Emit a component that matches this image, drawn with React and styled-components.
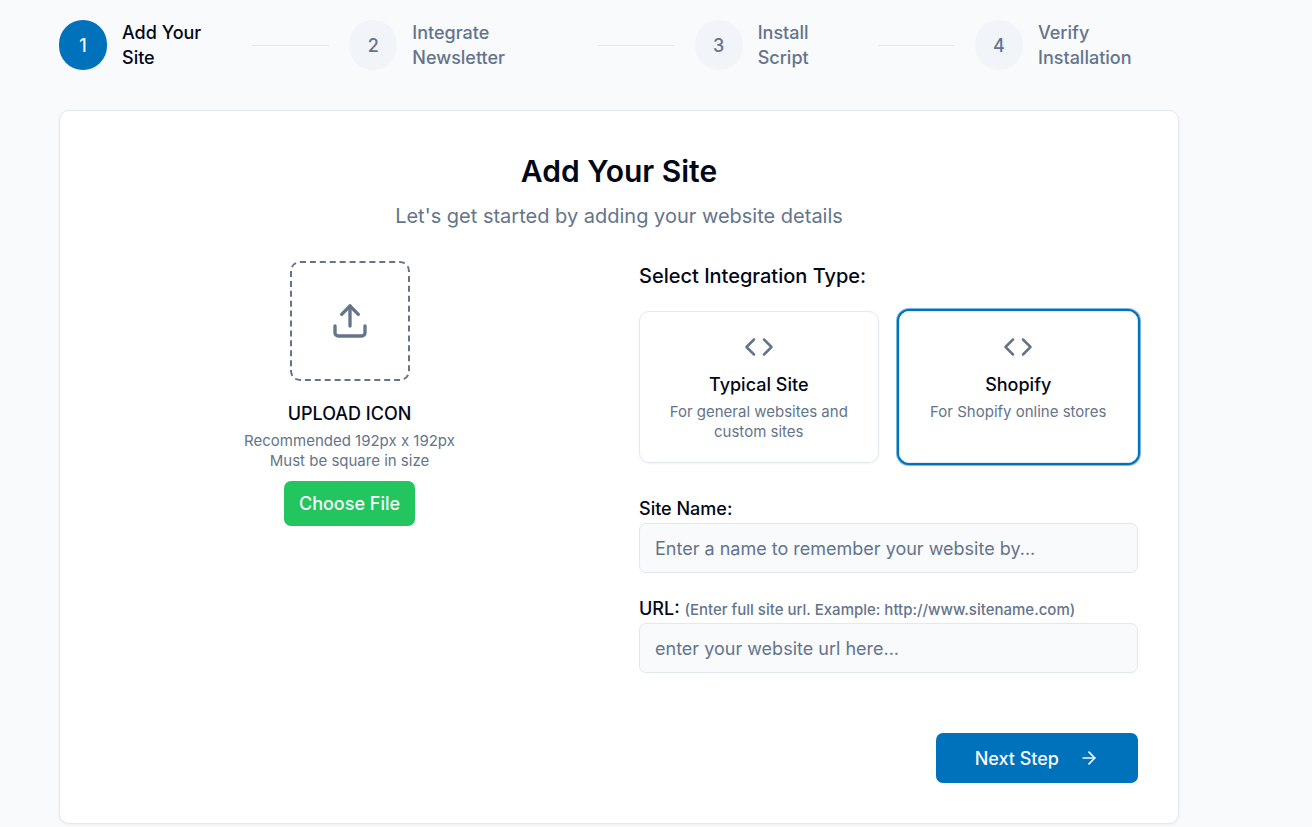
import React, { useState } from "react";
import styled, { createGlobalStyle, css } from "styled-components";
import { ArrowRight, Code, Upload } from "lucide-react";

const colors = {
  page: "#f8fafc",
  surface: "#ffffff",
  muted: "#f1f5f9",
  border: "#e2e8f0",
  text: "#020817",
  subtle: "#64748b",
  primary: "#0071bb",
  primarySoft: "rgba(0, 113, 187, 0.5)",
  success: "#22c55e",
};

const GlobalStyle = createGlobalStyle`
  *, *::before, *::after { box-sizing: border-box; }
  body {
    margin: 0;
    background: ${colors.page};
    color: ${colors.text};
    font-family: Inter, "Liberation Sans", sans-serif;
    font-size: 18px;
    line-height: 25px;
  }
  h1, h2, p, fieldset { margin: 0; padding: 0; border: 0; }
  button, input { font: inherit; }
`;

const Page = styled.main`
  padding: 20px 133px 3px 59px;
`;

const Stepper = styled.ol`
  display: flex;
  align-items: center;
  margin: 0 0 40px;
  padding: 0;
  list-style: none;
`;

const Step = styled.li`
  display: flex;
  align-items: center;
  gap: 15px;
  flex: 0 1 ${({ $basis }) => $basis}px;
  font-weight: 500;
  color: ${({ $active }) => ($active ? colors.text : colors.subtle)};
`;

const StepNumber = styled.span`
  display: flex;
  align-items: center;
  justify-content: center;
  flex: none;
  width: 48px;
  height: 50px;
  border-radius: 25px;
  background: ${({ $active }) => ($active ? colors.primary : colors.muted)};
  color: ${({ $active }) => ($active ? colors.page : colors.subtle)};
`;

const Connector = styled.li`
  flex: 1;
  height: 1px;
  margin: 0 20px;
  background: ${colors.border};
`;

const Card = styled.section`
  padding: 40px;
  border: 1px solid ${colors.border};
  border-radius: 10px;
  background: ${colors.surface};
  box-shadow: 0 1px 3px rgba(0, 0, 0, 0.05);
`;

const Header = styled.header`
  display: flex;
  flex-direction: column;
  gap: 10px;
  margin-bottom: 30px;
  text-align: center;
`;

const Title = styled.h1`
  font-size: 30px;
  line-height: 40px;
  font-weight: 600;
`;

const Subtitle = styled.p`
  font-size: 20px;
  line-height: 30px;
  color: ${colors.subtle};
`;

const Form = styled.form`
  display: grid;
  grid-template-columns: 1fr 1fr;
  gap: 40px;
`;

const UploadPanel = styled.div`
  display: flex;
  flex-direction: column;
  align-items: center;
  text-align: center;
`;

const DropZone = styled.div`
  display: flex;
  align-items: center;
  justify-content: center;
  width: 120px;
  height: 120px;
  margin-bottom: 20px;
  border: 2px dashed ${colors.subtle};
  border-radius: 10px;
  color: ${colors.subtle};
`;

const ItemTitle = styled.h2`
  margin-bottom: 5px;
  font-size: 18px;
  line-height: 25px;
  font-weight: 500;
`;

const Caption = styled.p`
  font-size: 15px;
  line-height: 20px;
  color: ${colors.subtle};
`;

const Button = styled.button`
  display: flex;
  align-items: center;
  justify-content: center;
  border: 0;
  border-radius: 7px;
  color: ${colors.page};
  font-weight: 500;
  cursor: pointer;
`;

const ChooseButton = styled(Button)`
  height: 45px;
  margin-top: 10px;
  padding: 0 15px;
  background: ${colors.success};
`;

const NextButton = styled(Button)`
  gap: 20px;
  height: 50px;
  margin: 60px 0 0 auto;
  padding: 0 39px;
  background: ${colors.primary};
`;

const Details = styled.div`
  min-width: 0;
`;

const Legend = styled.legend`
  margin-bottom: 20px;
  padding: 0;
  font-size: 20px;
  line-height: 30px;
  font-weight: 500;
`;

const Options = styled.div`
  display: grid;
  grid-template-columns: 1fr 1fr;
  gap: 20px;
`;

const Option = styled.label`
  position: relative;
  display: flex;
  flex-direction: column;
  align-items: center;
  padding: 20px;
  border: 1px solid ${colors.border};
  border-radius: 10px;
  text-align: center;
  box-shadow: 0 1px 2px rgba(0, 0, 0, 0.05);
  cursor: pointer;

  svg {
    margin-bottom: 10px;
    color: ${colors.subtle};
  }

  ${({ $selected }) =>
    $selected &&
    css`
      box-shadow: 0 0 0 2px ${colors.primary}, 0 0 0 3px ${colors.primarySoft};
    `}
`;

const OptionRadio = styled.input`
  position: absolute;
  inset: 0;
  margin: 0;
  opacity: 0;
  cursor: pointer;
`;

const Fields = styled.div`
  display: flex;
  flex-direction: column;
  gap: 20px;
  margin-top: 30px;
`;

const Field = styled.div`
  display: flex;
  flex-direction: column;
`;

const FieldLabel = styled.label`
  padding-top: 2px;
  line-height: 28px;
  font-weight: 500;
`;

const Hint = styled.span`
  font-size: 15px;
  line-height: 20px;
  color: ${colors.subtle};
`;

const TextInput = styled.input`
  width: 100%;
  height: 50px;
  padding: 0 15px;
  border: 1px solid ${colors.border};
  border-radius: 7px;
  background: ${colors.page};
  color: ${colors.text};

  &::placeholder {
    color: ${colors.subtle};
    opacity: 1;
  }
`;

const steps = [
  { lines: ["Add Your", "Site"], basis: 173 },
  { lines: ["Integrate", "Newsletter"], basis: 228 },
  { lines: ["Install", "Script"], basis: 163 },
  { lines: ["Verify", "Installation"], basis: 204 },
];

const integrations = [
  { id: "typical", title: "Typical Site", text: "For general websites and custom sites" },
  { id: "shopify", title: "Shopify", text: "For Shopify online stores" },
];

export default function App() {
  const [type, setType] = useState("shopify");

  return (
    <>
      <GlobalStyle />
      <Page>
        <Stepper>
          {steps.map(({ lines, basis }, i) => (
            <React.Fragment key={lines[0]}>
              {i > 0 && <Connector aria-hidden="true" />}
              <Step $basis={basis} $active={i === 0}>
                <StepNumber $active={i === 0}>{i + 1}</StepNumber>
                <span>
                  {lines[0]}
                  <br />
                  {lines[1]}
                </span>
              </Step>
            </React.Fragment>
          ))}
        </Stepper>

        <Card>
          <Header>
            <Title>Add Your Site</Title>
            <Subtitle>Let's get started by adding your website details</Subtitle>
          </Header>

          <Form onSubmit={(e) => e.preventDefault()}>
            <UploadPanel>
              <DropZone>
                <Upload size={40} />
              </DropZone>
              <ItemTitle>UPLOAD ICON</ItemTitle>
              <Caption>Recommended 192px x 192px</Caption>
              <Caption>Must be square in size</Caption>
              <ChooseButton type="button">Choose File</ChooseButton>
            </UploadPanel>

            <Details>
              <fieldset>
                <Legend>Select Integration Type:</Legend>
                <Options>
                  {integrations.map(({ id, title, text }) => (
                    <Option key={id} $selected={type === id}>
                      <OptionRadio
                        type="radio"
                        name="integration"
                        value={id}
                        checked={type === id}
                        onChange={() => setType(id)}
                      />
                      <Code size={30} />
                      <ItemTitle as="span">{title}</ItemTitle>
                      <Caption as="span">{text}</Caption>
                    </Option>
                  ))}
                </Options>
              </fieldset>

              <Fields>
                <Field>
                  <FieldLabel htmlFor="site-name">Site Name:</FieldLabel>
                  <TextInput
                    id="site-name"
                    type="text"
                    placeholder="Enter a name to remember your website by..."
                  />
                </Field>
                <Field>
                  <FieldLabel htmlFor="site-url">
                    URL: <Hint>(Enter full site url. Example: http://www.sitename.com)</Hint>
                  </FieldLabel>
                  <TextInput id="site-url" type="url" placeholder="enter your website url here..." />
                </Field>
              </Fields>

              <NextButton type="submit">
                Next Step
                <ArrowRight size={20} />
              </NextButton>
            </Details>
          </Form>
        </Card>
      </Page>
    </>
  );
}
